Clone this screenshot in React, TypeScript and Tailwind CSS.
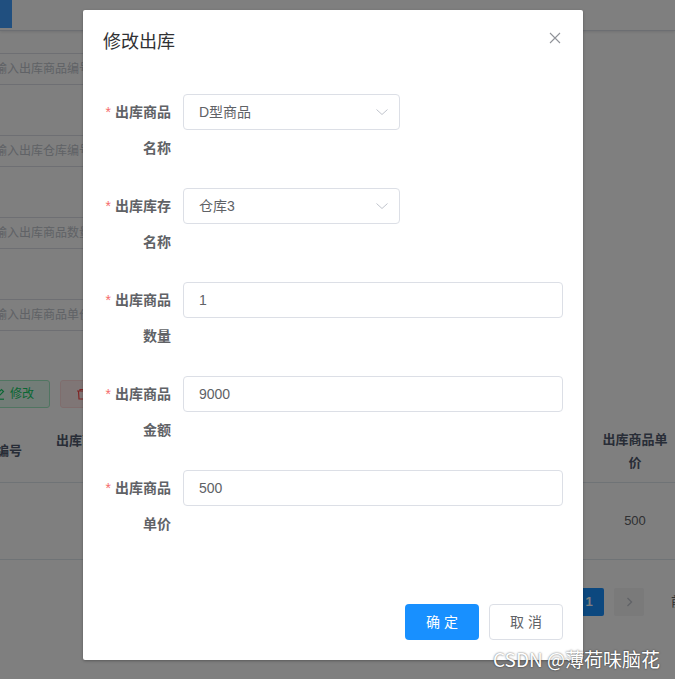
import React from "react";

const FONT = '"Liberation Sans","Noto Sans CJK SC",sans-serif';

function Chevron() {
  return (
    <svg width="12" height="6" viewBox="0 0 12 6" fill="none">
      <path d="M0.5 0.5 L6 5.5 L11.5 0.5" stroke="#c0c4cc" strokeWidth="1" />
    </svg>
  );
}

function FormItem({ l1, l2, children }: { l1: string; l2: string; children: React.ReactNode }) {
  return (
    <div className="flex mb-[22px]">
      <div className="w-[80px] shrink-0 pr-[12px] text-right text-[14px] font-bold text-[#606266] leading-[36px]">
        <div className="whitespace-nowrap">
          <span className="text-[#f56c6c] mr-[4px] font-normal">*</span>
          {l1}
        </div>
        <div>{l2}</div>
      </div>
      {children}
    </div>
  );
}

function TextInput({ value }: { value: string }) {
  return (
    <div className="w-[380px] h-[36px] border border-[#dcdfe6] rounded-[4px] pl-[15px] flex items-center text-[14px] text-[#606266]">
      {value}
    </div>
  );
}

function SelectInput({ value }: { value: string }) {
  return (
    <div className="w-[217px] h-[36px] border border-[#dcdfe6] rounded-[4px] pl-[15px] pr-[11px] flex items-center justify-between text-[14px] text-[#606266]">
      <span>{value}</span>
      <Chevron />
    </div>
  );
}

function BgInput({ text }: { text: string }) {
  return (
    <div className="w-[260px] h-[32px] border border-[#dcdfe6] rounded-[4px] pl-[15px] flex items-center text-[12px] text-[#c0c4cc] whitespace-nowrap">
      {text}
    </div>
  );
}

export default function App() {
  return (
    <div className="relative w-[675px] h-[679px] overflow-hidden bg-white" style={{ fontFamily: FONT }}>
      {/* background page */}
      <div className="h-[31px] border-b border-[#d8dce5] shadow-[0_1px_3px_rgba(0,21,41,0.12)] flex">
        <div className="w-[12px] h-[28px] bg-[#409eff]" />
      </div>
      <div className="ml-[-33px] mt-[22px] flex flex-col gap-[50px]">
        <BgInput text="请输入出库商品编号" />
        <BgInput text="请输入出库仓库编号" />
        <BgInput text="请输入出库商品数量" />
        <BgInput text="请输入出库商品单价" />
      </div>
      <div className="ml-[-23px] mt-[49px] flex gap-[10px]">
        <div className="h-[28px] px-[15px] flex items-center gap-[5px] rounded-[3px] border border-[#a0ebc2] bg-[#e7faf0] text-[#13ce66] text-[12px]">
          <svg width="12" height="12" viewBox="0 0 12 12" fill="none" stroke="#13ce66" strokeWidth="1.2">
            <path d="M2 10 L2.5 7.5 L8.5 1.5 L10.5 3.5 L4.5 9.5 Z" />
            <path d="M1 11.2 H11" />
          </svg>
          <span>修改</span>
        </div>
        <div className="h-[28px] px-[15px] flex items-center gap-[5px] rounded-[3px] border border-[#ffdbdb] bg-[#ffeded] text-[#ff4949] text-[12px]">
          <svg width="12" height="12" viewBox="0 0 12 12" fill="none" stroke="#ff4949" strokeWidth="1.2">
            <path d="M1 3 H11 M4 3 V1.5 H8 V3 M2.5 3 L3 11 H9 L9.5 3" />
          </svg>
          <span>删除</span>
        </div>
      </div>
      {/* table */}
      <div className="mt-[11px] ml-[-50px] w-[740px]">
        <div className="flex h-[64px] border-b border-[#dfe6ec] text-[13px] font-bold text-[#515a6e]">
          <div className="w-[92px] flex items-center justify-center">出库编号</div>
          <div className="w-[80px] flex flex-col items-center justify-center leading-[20px]">
            <span>出库商品</span>
            <span className="pl-[26px]">名</span>
          </div>
          <div className="w-[468px]" />
          <div className="w-[90px] flex flex-col items-center justify-center leading-[23px]">
            <span>出库商品单</span>
            <span>价</span>
          </div>
        </div>
        <div className="flex h-[77px] border-b border-[#dfe6ec] text-[13px] text-[#606266]">
          <div className="w-[92px]" />
          <div className="w-[80px]" />
          <div className="w-[468px]" />
          <div className="w-[90px] flex items-center justify-center">500</div>
        </div>
      </div>
      <div className="mt-[28px] ml-[574px] flex items-center w-[200px]">
        <div className="w-[30px] h-[28px] rounded-[2px] bg-[#1890ff] text-white text-[13px] font-bold flex items-center justify-center">1</div>
        <div className="ml-[10px] w-[30px] h-[28px] rounded-[2px] bg-[#f4f4f5] flex items-center justify-center">
          <svg width="7" height="10" viewBox="0 0 7 10" fill="none">
            <path d="M1.5 1 L5.5 5 L1.5 9" stroke="#c0c4cc" strokeWidth="1.3" />
          </svg>
        </div>
        <span className="ml-[27px] text-[13px] text-[#606266] whitespace-nowrap">前往</span>
      </div>

      {/* modal overlay */}
      <div className="absolute inset-0 bg-black/50" />

      {/* dialog */}
      <div className="absolute left-[83px] top-[10px] w-[500px] bg-white rounded-[2px] shadow-[0_1px_3px_rgba(0,0,0,0.3)]">
        <div className="pt-[20px] px-[20px] pb-[10px] flex items-center justify-between">
          <span className="text-[18px] leading-[24px] text-[#303133]">修改出库</span>
          <svg width="12" height="12" viewBox="0 0 12 12" className="mr-[2px] mt-[-8px]">
            <path d="M1 1 L11 11 M11 1 L1 11" stroke="#909399" strokeWidth="1.1" />
          </svg>
        </div>
        <div className="pt-[30px] pb-[30px] px-[20px]">
          <FormItem l1="出库商品" l2="名称">
            <SelectInput value="D型商品" />
          </FormItem>
          <FormItem l1="出库库存" l2="名称">
            <SelectInput value="仓库3" />
          </FormItem>
          <FormItem l1="出库商品" l2="数量">
            <TextInput value="1" />
          </FormItem>
          <FormItem l1="出库商品" l2="金额">
            <TextInput value="9000" />
          </FormItem>
          <FormItem l1="出库商品" l2="单价">
            <TextInput value="500" />
          </FormItem>
        </div>
        <div className="pt-[10px] px-[20px] pb-[20px] flex justify-end gap-[10px]">
          <div className="w-[74px] h-[36px] rounded-[4px] bg-[#1890ff] text-white text-[14px] flex items-center justify-center">确 定</div>
          <div className="w-[74px] h-[36px] rounded-[4px] border border-[#dcdfe6] bg-white text-[#606266] text-[14px] flex items-center justify-center">取 消</div>
        </div>
      </div>

      {/* watermark */}
      <div
        className="absolute right-[15px] top-[647px] text-[19px] leading-[24px] text-white whitespace-nowrap [text-shadow:0_0_2px_rgba(0,0,0,0.7)]"
        style={{ fontFamily: '"Noto Sans CJK SC",sans-serif' }}
      >
        CSDN @薄荷味脑花
      </div>
    </div>
  );
}
